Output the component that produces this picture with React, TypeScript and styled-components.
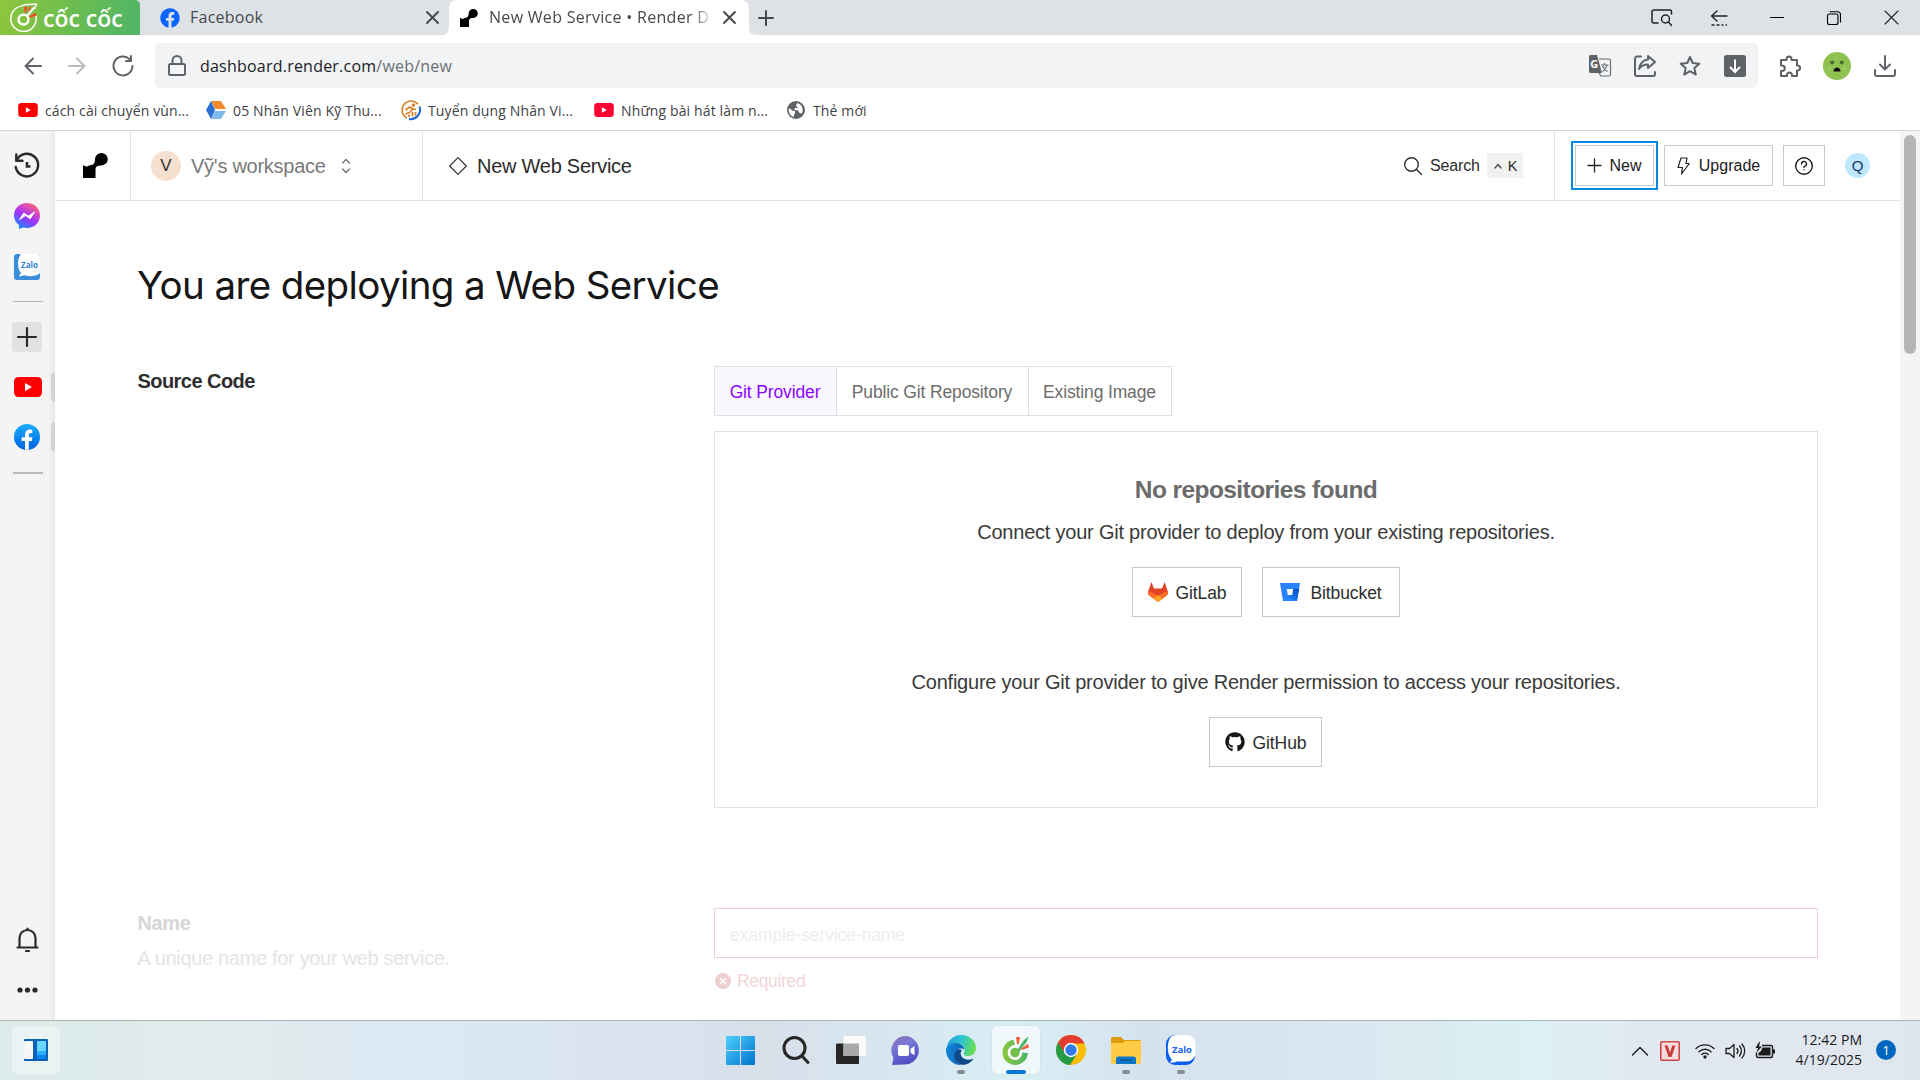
import React from 'react';
import styled, { createGlobalStyle } from 'styled-components';
import { FaGithub, FaFacebook } from 'react-icons/fa';

const SITE = '"Liberation Sans", Arial, sans-serif';
const SYSTEM = '"Open Sans", "Noto Sans", sans-serif';

const GlobalStyle = createGlobalStyle`
  *, *::before, *::after { box-sizing: border-box; }
  body { margin: 0; background: #fff; overflow: hidden; }
  svg { display: block; flex: none; overflow: visible; }
  button { background: none; border: 0; padding: 0; margin: 0; color: inherit; font: inherit; letter-spacing: inherit; }
`;

const Screen = styled.div`
  width: 1920px;
  height: 1080px;
  display: flex;
  flex-direction: column;
  overflow: hidden;
  background: #fff;
  font-family: ${SYSTEM};
`;

/* ---------- Browser chrome ---------- */

const TabStrip = styled.header`
  height: 35px;
  display: flex;
  flex: none;
  background: #dee1e6;
`;
const Brand = styled.div`
  width: 140px;
  height: 35px;
  display: flex;
  align-items: center;
  padding-left: 9px;
  gap: 5px;
  border-top-right-radius: 5px;
  background: linear-gradient(100deg, #8fc53d 0%, #6cbd4f 50%, #4fb567 100%);
  color: #fff;
`;
const BrandName = styled.span`
  font: 600 23px/36px "Open Sans", sans-serif;
  letter-spacing: 0;
  white-space: nowrap;
`;
const Tab = styled.div<{ $active?: boolean }>`
  position: relative;
  width: ${(p) => (p.$active ? 300 : 309)}px;
  height: 35px;
  display: flex;
  align-items: center;
  padding: 0 ${(p) => (p.$active ? '11px 0 11px' : '8px 0 20px')};
  background: ${(p) => (p.$active ? '#fff' : 'transparent')};
  border-radius: 8px 8px 0 0;
  color: #45484c;
  ${(p) =>
    p.$active &&
    `&::before, &::after { content: ''; position: absolute; bottom: 0; width: 6px; height: 6px; }
     &::before { left: -6px; background: radial-gradient(circle at 0 0, transparent 5.5px, #fff 6px); }
     &::after { right: -6px; background: radial-gradient(circle at 100% 0, transparent 5.5px, #fff 6px); }`}
`;
const TabTitle = styled.span<{ $fade?: boolean }>`
  flex: 1;
  margin: 0 8px 0 ${(p) => (p.$fade ? 11 : 10)}px;
  white-space: nowrap;
  font-size: 16px;
  line-height: 35px;
  letter-spacing: ${(p) => (p.$fade ? 0.3 : 0.25)}px;
  ${(p) => p.$fade && 'mask-image: linear-gradient(90deg, #000 91%, transparent 100%);'}
`;
const TabClose = styled.button`
  display: grid;
  place-items: center;
  width: 17px;
  height: 17px;
`;
const NewTab = styled.button`
  display: grid;
  place-items: center;
  width: 34px;
  height: 35px;
`;
const WindowControls = styled.div`
  margin-left: auto;
  display: grid;
  grid-template-columns: repeat(5, 57.25px);
  place-items: center;
  height: 35px;
`;
const Toolbar = styled.div`
  height: 61px;
  flex: none;
  display: flex;
  align-items: center;
  background: #fff;
`;
const NavButtons = styled.div`
  width: 155px;
  display: flex;
  align-items: center;
  padding-left: 24px;
  gap: 26px;
`;
const Omnibox = styled.div`
  width: 1603px;
  height: 45px;
  border-radius: 5px;
  background: #f1f3f4;
  display: flex;
  align-items: center;
  padding: 0 12px 0 13px;
`;
const Url = styled.span`
  margin-left: 14px;
  margin-right: auto;
  font-size: 16px;
  letter-spacing: 0.22px;
  color: #202124;
  em { font-style: normal; color: #6b6f74; }
`;
const IconRow = styled.div<{ $gap: number; $left?: number }>`
  display: flex;
  align-items: center;
  gap: ${(p) => p.$gap}px;
  margin-left: ${(p) => p.$left ?? 0}px;
`;
const Bookmarks = styled.nav`
  height: 35px;
  flex: none;
  display: flex;
  border-bottom: 1px solid #d3d5d8;
  padding-left: 18px;
`;
const Bookmark = styled.a<{ $w: number }>`
  width: ${(p) => p.$w}px;
  height: 28px;
  display: flex;
  align-items: center;
  gap: 7px;
  font-size: 14px;
  letter-spacing: 0.13px;
  color: #3f4246;
  white-space: nowrap;
`;

/* ---------- Left rail ---------- */

const Body = styled.div`
  height: 889px;
  flex: none;
  display: flex;
`;
const Rail = styled.aside`
  width: 55px;
  background: linear-gradient(90deg, #f4f4f4 88%, #e9e9e9 100%);
  display: flex;
  flex-direction: column;
`;
const RailItem = styled.div<{ $h: number; $tab?: boolean }>`
  height: ${(p) => p.$h}px;
  display: flex;
  align-items: center;
  padding-left: 14px;
  ${(p) =>
    p.$tab &&
    `&::after { content: ''; width: 4px; height: 30px; margin-left: auto; border-radius: 4px 0 0 4px; background: #d4d4d4; }`}
`;
const RailLine = styled.hr<{ $t: number; $mt: number; $mb: number }>`
  width: 30px;
  height: ${(p) => p.$t}px;
  border: 0;
  margin: ${(p) => p.$mt}px 0 ${(p) => p.$mb}px 13px;
  background: #b9b9b9;
`;
const AddTile = styled.button`
  width: 30px;
  height: 30px;
  margin-left: -2px;
  border-radius: 4px;
  background: #e2e2e2;
  display: grid;
  place-items: center;
`;
const Spacer = styled.div`
  flex: 1;
`;

/* ---------- Render dashboard ---------- */

const Page = styled.div`
  width: 1845px;
  font-family: ${SITE};
  color: #2b2b2b;
  overflow: hidden;
`;
const Header = styled.div`
  height: 70px;
  display: flex;
  border-bottom: 1px solid #e3e3e3;
`;
const HeaderCell = styled.div<{ $w?: number; $pl: number; $line?: boolean }>`
  ${(p) => (p.$w ? `width: ${p.$w}px;` : 'flex: 1;')}
  display: flex;
  align-items: center;
  padding-left: ${(p) => p.$pl}px;
  ${(p) => p.$line && 'border-right: 1px solid #e3e3e3;'}
`;
const Avatar = styled.span<{ $size: number; $font: number; $bg: string; $fg: string }>`
  width: ${(p) => p.$size}px;
  height: ${(p) => p.$size}px;
  border-radius: 50%;
  background: ${(p) => p.$bg};
  color: ${(p) => p.$fg};
  display: grid;
  place-items: center;
  font-size: ${(p) => p.$font}px;
  line-height: 1;
`;
const Workspace = styled.span`
  margin: 0 15px 0 10px;
  padding-top: 1px;
  font-size: 20px;
  letter-spacing: -0.26px;
  color: #7a7a7a;
`;
const Crumb = styled.span`
  margin-left: 10px;
  padding-top: 1px;
  font-size: 20px;
  letter-spacing: -0.26px;
`;
const SearchLabel = styled.span`
  margin: 0 7px 0 8px;
  font-size: 16px;
  letter-spacing: -0.15px;
`;
const Shortcut = styled.kbd`
  width: 36px;
  height: 25px;
  background: #f1f1f1;
  display: flex;
  align-items: center;
  padding-left: 7px;
  gap: 6px;
  font: 14.5px ${SITE};
`;
const ActionButton = styled.button<{ $w: number; $mr: number; $focus?: boolean }>`
  width: ${(p) => p.$w}px;
  height: 41px;
  margin-right: ${(p) => p.$mr}px;
  border: 1px solid #c9c9c9;
  display: flex;
  align-items: center;
  justify-content: center;
  gap: 7px;
  font-size: 16px;
  color: #1c1c1c;
  ${(p) => p.$focus && 'outline: 2px solid #068ae6; outline-offset: 2px;'}
`;
const Content = styled.main`
  padding-left: 82px;
`;
const PageTitle = styled.h1`
  margin: 0;
  height: 165px;
  padding-top: 59px;
  font: 400 38.5px/50px Inter, sans-serif;
  letter-spacing: -0.61px;
  color: #161616;
`;
const Section = styled.section<{ $h: number }>`
  display: grid;
  grid-template-columns: 577px 1104px;
  align-items: start;
  height: ${(p) => p.$h}px;
`;
const SectionTitle = styled.h2<{ $muted?: boolean }>`
  margin: 0 0 0 0.5px;
  font-size: 20px;
  line-height: 30px;
  font-weight: 700;
  letter-spacing: ${(p) => (p.$muted ? -0.35 : -0.55)}px;
  color: ${(p) => (p.$muted ? '#d6d6d6' : '#2e2e2e')};
`;
const SectionNote = styled.p`
  margin: 5px 0 0 0.5px;
  font-size: 20px;
  line-height: 30px;
  letter-spacing: -0.32px;
  color: #e4e4e4;
`;
const Tabs = styled.div`
  width: 458px;
  height: 50px;
  display: flex;
  border: 1px solid #e0e0e3;
  margin-bottom: 15px;
`;
const SourceTab = styled.button<{ $w: number; $on?: boolean }>`
  width: ${(p) => p.$w}px;
  padding: 2px 1px 0 0;
  font-size: 17.5px;
  letter-spacing: -0.14px;
  color: ${(p) => (p.$on ? '#8a05ff' : '#6c6c6c')};
  background: ${(p) => (p.$on ? '#faf7ff' : '#fff')};
  & + & { border-left: 1px solid #e0e0e3; }
`;
const Panel = styled.div`
  height: 377px;
  border: 1px solid #e3e3e3;
  padding-top: 40px;
  display: flex;
  flex-direction: column;
  align-items: center;
`;
const EmptyTitle = styled.h3`
  margin: 0 20px 9px 0;
  font-size: 24.5px;
  line-height: 36px;
  font-weight: 700;
  letter-spacing: -0.58px;
  color: #6b6b6b;
`;
const Hint = styled.p`
  margin: 0;
  font-size: 20px;
  line-height: 30px;
  letter-spacing: -0.22px;
  color: #3a3a3a;
`;
const Providers = styled.div<{ $mb: number; $mr?: number }>`
  margin: 20px ${(p) => p.$mr ?? 0}px ${(p) => p.$mb}px 0;
  display: flex;
  gap: 20px;
`;
const Provider = styled.button<{ $w: number; $gap: number }>`
  width: ${(p) => p.$w}px;
  height: 50px;
  border: 1px solid #c9c9c9;
  display: flex;
  align-items: center;
  justify-content: center;
  gap: ${(p) => p.$gap}px;
  font-size: 17.5px;
  letter-spacing: -0.1px;
  color: #2e2e2e;
  span { padding-top: 2px; }
`;
const NameInput = styled.input`
  display: block;
  width: 1104px;
  height: 50px;
  border: 1px solid #f0cfd3;
  padding: 4px 15px 0 15px;
  font: 17.5px ${SITE};
  letter-spacing: -0.1px;
  outline: 0;
  &::placeholder { color: #eeeeee; opacity: 1; }
`;
const FieldError = styled.div`
  margin-top: 12px;
  height: 22px;
  display: flex;
  align-items: center;
  gap: 6px;
  font-size: 17.5px;
  letter-spacing: -0.33px;
  color: #f3d5d8;
  padding-left: 1px;
`;
const Scrollbar = styled.div`
  width: 20px;
  background: #f4f4f4;
  padding: 4px 4px 0;
`;
const Thumb = styled.div`
  width: 12px;
  height: 219px;
  border-radius: 6px;
  background: #b5b5b5;
`;

/* ---------- Taskbar ---------- */

const Taskbar = styled.footer`
  height: 60px;
  flex: none;
  display: grid;
  grid-template-columns: 713px 1fr 290px;
  border-top: 1px solid #adb5ba;
  background: linear-gradient(90deg, #dcebea 0, #e1ebec 200px, #e1e9ee 310px, #dce9f5 370px, #dbe6f4 520px, #d8e0ea 760px,
    #d7e5ee 870px, #d8eef4 1010px, #d6e2ee 1150px, #d8e6ef 1300px, #dcf0f5 1540px, #e1e8f0 1650px, #dfe6ee 1920px);
`;
const WidgetTile = styled.div`
  width: 48px;
  height: 48px;
  margin: 5px 0 0 12px;
  border-radius: 5px;
  background: rgba(255, 255, 255, 0.38);
  display: grid;
  place-items: center;
`;
const Apps = styled.div`
  display: grid;
  grid-template-columns: repeat(9, 55px);
  align-content: start;
  padding-top: 5px;
`;
const AppButton = styled.div<{ $active?: boolean; $running?: boolean }>`
  position: relative;
  width: 48px;
  height: 48px;
  justify-self: center;
  display: grid;
  place-items: center;
  border-radius: 5px;
  ${(p) => p.$active && 'background: rgba(255,255,255,.62); box-shadow: 0 0 1px rgba(0,0,0,.25);'}
  ${(p) =>
    p.$running &&
    `&::after { content: ''; position: absolute; bottom: 0; left: 50%; transform: translateX(-50%);
      width: ${p.$active ? 20 : 8}px; height: 4px; border-radius: 2px; background: ${p.$active ? '#0a76d4' : '#858b90'}; }`}
`;
const Tray = styled.div`
  display: flex;
  align-items: center;
  color: #1b1b1b;
`;
const Clock = styled.div`
  margin-left: auto;
  padding-bottom: 2px;
  text-align: right;
  font-size: 14px;
  line-height: 20px;
  letter-spacing: 0.02px;
`;
const CountBadge = styled.span`
  width: 20px;
  height: 20px;
  margin: 0 24px 2px 14px;
  border-radius: 50%;
  background: #0067c0;
  color: #fff;
  font-size: 13.5px;
  line-height: 20px;
  text-align: center;
`;

/* ---------- Drawings ---------- */

const Stroke = ({ w = 20, h = w, vb, c = '#5f6368', sw = 2, children }: any) => (
  <svg width={w} height={h} viewBox={vb ?? `0 0 ${w} ${h}`} fill="none" stroke={c} strokeWidth={sw} strokeLinecap="round" strokeLinejoin="round">
    {children}
  </svg>
);

const RenderMark = ({ w }: { w: number }) => (
  <svg width={w} height={w} viewBox="0 0 25 25">
    <path d="M18.500 0a6.200 6.200 0 0 1 0 12.400c-3 0-6 .5-6 4.400V25H0V12.400h1.200A3.200 3.200 0 0 0 6 12.400c4 0 6-1.800 6-6.200A6.300 6.300 0 0 1 18.500 0z" />
  </svg>
);

const History = () => (
  <Stroke w={26} c="#2a2a2a" sw={2.4}>
    <path d="M2.500 7.500A11.300 11.300 0 1 1 1.700 14" />
    <path d="M2.300 1.500v6.300h6.200" />
    <path d="M13 9v4.500h3.500" strokeWidth="2.600" strokeLinecap="butt" strokeLinejoin="miter" />
  </Stroke>
);

const YouTube = ({ w, h, c = '#ff0000' }: { w: number; h: number; c?: string }) => (
  <svg width={w} height={h} viewBox="0 0 28 20">
    <rect width="28" height="20" rx="4.500" fill={c} />
    <path d="M11 6v8l7-4z" fill="#fff" />
  </svg>
);

const CloseX = ({ s = 12, sw = 1.9, c = '#45484c' }) => (
  <Stroke w={s} c={c} sw={sw}>
    <path d={`M1 1L${s - 1} ${s - 1}M${s - 1} 1L1 ${s - 1}`} />
  </Stroke>
);

const Plus = ({ s, sw, c }: { s: number; sw: number; c: string }) => (
  <Stroke w={s} c={c} sw={sw}>
    <path d={`M${s / 2} 1V${s - 1}M1 ${s / 2}H${s - 1}`} />
  </Stroke>
);

const CocCocHand = ({ s, white }: { s: number; white?: boolean }) => (
  <svg width={s} height={s} viewBox="0 0 28 28" fill="none">
    <defs>
      <linearGradient id="ccg" x1="0" x2="1">
        <stop stopColor="#8cc63f" />
        <stop offset="1" stopColor="#4db56a" />
      </linearGradient>
    </defs>
    {white ? (
      <>
        <path d="M12 3A12.300 12.300 0 1 0 26.300 15.500c0-1.500-.2-2.500-.5-3.500M12 3C14 1.300 20 1 26.500 1.200L24.500 6" stroke="#fff" strokeWidth="1.400" />
        <circle cx="14" cy="16" r="4.800" stroke="#fff" strokeWidth="2.300" />
        <path d="M17.500 12.500L24.500 4" stroke="#fff" strokeWidth="2" />
        <path d="M14.500 3.500h3.200l-1.200 6h-1.500zM25.500 9.500l1 2.800-6.300 2-.7-1.500zM19.500 3.500h2l-2.500 5h-1z" fill="#f4492d" />
      </>
    ) : (
      <>
        <path d="M12 3.500A12.300 12.300 0 1 0 26 16.500l-5.500-.5a7 7 0 1 1-7-7z" fill="url(#ccg)" />
        <circle cx="13.500" cy="16" r="7" fill="#fff" />
        <circle cx="13.500" cy="16" r="4.600" fill="#74bf4c" />
        <path d="M15.500 14L22 4l4.500-3.500-1.500 5-6 7.500-1 2z" fill="#4db56a" />
        <path d="M14.500 1h4L17 8h-1.500zM26 7.500l1 3.500-7 2.500-.5-1.500z" fill="#f4603a" />
      </>
    )}
  </svg>
);

const ZaloSide = () => (
  <svg width="26" height="26" viewBox="0 0 26 26">
    <rect width="26" height="26" rx="3" fill="#3a8edb" />
    <path d="M7 0h16a3 3 0 0 1 3 3v16c-4 3.500-12 4-16 2-1 1-3 1.500-5 1l2-3C3 14 3 5 7 0z" fill="#fff" />
    <text x="15.500" y="14" textAnchor="middle" fontFamily="Open Sans, sans-serif" fontSize="8" fontWeight="700" fill="#2f80d0">Zalo</text>
  </svg>
);

const ZaloApp = () => (
  <svg width="30" height="30" viewBox="0 0 30 30">
    <rect y="0" width="29" height="30" rx="9" fill="#0b5cf0" />
    <path d="M10 0h11a8.500 8.500 0 0 1 8.500 8.500v9A9 9 0 0 1 21 26.500H11c-2 1-5 1.500-7 1l2-3C0 19 1 4 6 1z" fill="#fff" />
    <text x="16" y="17.500" textAnchor="middle" fontFamily="Open Sans, sans-serif" fontSize="9.500" fontWeight="700" fill="#1464f0">Zalo</text>
  </svg>
);

const Messenger = () => (
  <svg width="26" height="26" viewBox="0 0 26 26">
    <defs>
      <linearGradient id="msg" x1="0.2" y1="1" x2="0.8" y2="0">
        <stop stopColor="#0a8fff" />
        <stop offset=".45" stopColor="#a033ff" />
        <stop offset=".75" stopColor="#d94bb5" />
        <stop offset="1" stopColor="#ff6a6a" />
      </linearGradient>
    </defs>
    <path d="M13 0c7.500 0 13 5.400 13 12.500S20.500 25 13 25c-1.300 0-2.500-.2-3.600-.5L5 26v-4C2 19.800 0 16.500 0 12.500 0 5.400 5.500 0 13 0z" fill="url(#msg)" />
    <path d="M5.500 16.500l4.300-6.500 4.700 3.200L20.500 9l-4.300 6.800-4.700-3.300z" fill="#fff" stroke="#fff" strokeLinejoin="round" />
  </svg>
);

const FacebookRound = () => (
  <svg width="26" height="26" viewBox="0 0 26 26">
    <defs>
      <linearGradient id="fbg" x1="0" y1="0" x2="0" y2="1">
        <stop stopColor="#18acfe" />
        <stop offset="1" stopColor="#0163e0" />
      </linearGradient>
    </defs>
    <circle cx="13" cy="13" r="13" fill="url(#fbg)" />
    <path d="M11 25.800V17H7.700v-3.800H11v-2.600c0-3.300 2-5.100 4.900-5.100 1.300 0 2.400.2 2.400.2v3.200h-1.500c-1.600 0-2 1-2 2v2.300h3.600L17.800 17h-3v8.800z" fill="#fff" />
  </svg>
);

const GitLab = () => (
  <svg width="20" height="20" viewBox="0 0 20 20">
    <path d="M3.400 0L6 6.500h8L16.600 0 20 10l-.8 3L10 20 .8 13 0 10z" fill="#e24329" />
    <path d="M0 9.500c3 0 5 1 10 5.200C15 10.500 17 9.500 20 9.500c.2 1.500-.2 2.800-1 3.700L10 20 1 13.200C.2 12.300-.2 11 0 9.500z" fill="#fc6d26" />
    <path d="M10 13l4.500 3.600L10 20l-4.500-3.400z" fill="#fca326" />
  </svg>
);

const Bitbucket = () => (
  <svg width="20" height="18" viewBox="0 0 20 18">
    <defs>
      <linearGradient id="bbg" x1="1" y1=".3" x2=".4" y2=".9">
        <stop stopColor="#0052cc" />
        <stop offset="1" stopColor="#2684ff" />
      </linearGradient>
    </defs>
    <path d="M0 0h20l-3 18H3z" fill="#2684ff" />
    <path d="M13 6h6l-2 12H3l6-6h3z" fill="url(#bbg)" />
    <path d="M6.800 6h6.400l-1 6H7.800z" fill="#fff" />
  </svg>
);

const AvatarFace = () => (
  <svg width="28" height="28" viewBox="0 0 28 28">
    <circle cx="14" cy="14" r="14" fill="#8fc250" />
    <circle cx="9.200" cy="10.500" r="2" fill="#4a6b2c" />
    <circle cx="18.800" cy="10.500" r="2" fill="#4a6b2c" />
    <path d="M10.500 19.500c0-5.500 7-5.500 7 0z" fill="#111" />
    <path d="M6 16.500h1.500M20.500 16.500H22" stroke="#c5e29b" strokeWidth="1.500" />
  </svg>
);

const Edge = () => (
  <svg width="30" height="30" viewBox="0 0 30 30">
    <defs>
      <linearGradient id="eg1" x1="0" x2="1" y1=".2" y2=".4">
        <stop stopColor="#1f9fdf" />
        <stop offset=".5" stopColor="#2cc4cf" />
        <stop offset="1" stopColor="#6be04e" />
      </linearGradient>
      <linearGradient id="eg2" x1="0" x2="1">
        <stop stopColor="#1389d8" />
        <stop offset="1" stopColor="#0b62b5" />
      </linearGradient>
    </defs>
    <path d="M1 11C3 4 8.500 0 15 0c9 0 15 6 15 13 0 5-3.500 8-8 8-3.500 0-5.500-1.500-4-3.500 2-4-1-9-7-9-4 0-8 1-10 2.500z" fill="url(#eg1)" />
    <path d="M0 15c0-4 4-7 9.500-7 5 0 8.500 3 8.800 6.500C15 12 10 14 9 19s2 9 7 11C7 30.500 0 24 0 15z" fill="url(#eg2)" />
    <path d="M10 16c-4 5-1 12.500 6 13.800 5 .4 9.500-2.500 11.500-6.300-4 2-9 1.500-11.500-1.500-2-2.300-1.500-5 0-7-2-1-4.500-1-6 1z" fill="#114a8b" />
  </svg>
);

const Chrome = () => (
  <svg width="30" height="30" viewBox="0 0 30 30">
    <circle cx="15" cy="15" r="15" fill="#fbbc05" />
    <path d="M15 15L2 7.500A15 15 0 0 0 14 30l7-11z" fill="#259b48" />
    <path d="M15 8.500h13.500A15 15 0 0 0 2 7.500L9 18.500z" fill="#e33b2e" />
    <circle cx="15" cy="15" r="7.200" fill="#fff" />
    <circle cx="15" cy="15" r="5.700" fill="#2f7bea" />
  </svg>
);

const Explorer = () => (
  <svg width="30" height="27" viewBox="0 0 30 27">
    <path d="M0 2a2 2 0 0 1 2-2h8l3 3h15a2 2 0 0 1 2 2v5H0z" fill="#dd9b08" />
    <path d="M0 6h12l2-2h16v21a2 2 0 0 1-2 2H2a2 2 0 0 1-2-2z" fill="#ffcd45" />
    <path d="M5 27v-5a2.500 2.500 0 0 1 2.500-2.500h15A2.500 2.500 0 0 1 25 22v5z" fill="#0f75c5" />
    <path d="M9 23h12" stroke="#0a4d8c" strokeWidth="1.200" />
  </svg>
);

const WindowsLogo = () => (
  <svg width="29" height="29" viewBox="0 0 29 29">
    <defs>
      <linearGradient id="wing" x1="0" y1="0" x2="1" y2="1">
        <stop stopColor="#4fd0fb" />
        <stop offset="1" stopColor="#0072d0" />
      </linearGradient>
    </defs>
    <path d="M1 0h13v14H0V1a1 1 0 0 1 1-1zM15 0h13a1 1 0 0 1 1 1v13H15zM0 15h14v14H1a1 1 0 0 1-1-1zM15 15h14v13a1 1 0 0 1-1 1H15z" fill="url(#wing)" />
  </svg>
);

const ChatApp = () => (
  <svg width="29" height="29" viewBox="0 0 29 29">
    <defs>
      <linearGradient id="chg" x1="0" y1="0" x2=".4" y2="1">
        <stop stopColor="#8b6aa8" />
        <stop offset=".4" stopColor="#7b79d8" />
        <stop offset="1" stopColor="#4f4dc4" />
      </linearGradient>
    </defs>
    <path d="M15 0a14 14 0 1 1-3 28.500L1 29l1.500-7A14.500 14.500 0 0 1 15 0z" fill="url(#chg)" />
    <rect x="7" y="9" width="11" height="11" rx="1.800" fill="#fff" />
    <path d="M19.500 13l4-3v9.500l-4-3z" fill="#fff" />
  </svg>
);

export default function App() {
  return (
    <Screen>
      <GlobalStyle />
      <TabStrip>
        <Brand>
          <CocCocHand s={29} white />
          <BrandName>cốc cốc</BrandName>
        </Brand>
        <Tab>
          <FaFacebook size={20} color="#0866ff" />
          <TabTitle>Facebook</TabTitle>
          <TabClose><CloseX s={13} /></TabClose>
        </Tab>
        <Tab $active>
          <RenderMark w={18} />
          <TabTitle $fade>New Web Service • Render D</TabTitle>
          <TabClose><CloseX s={13} /></TabClose>
        </Tab>
        <NewTab><Plus s={16} sw={2} c="#45484c" /></NewTab>
        <WindowControls>
          <Stroke w={22} h={18} c="#222" sw={1.5}>
            <path d="M7 14H3a2 2 0 0 1-2-2V3a2 2 0 0 1 2-2h16a1.500 1.500 0 0 1 1.500 1.500V5" />
            <circle cx="14.500" cy="10" r="4" />
            <path d="M17.500 13l3 3.500" />
          </Stroke>
          <Stroke w={18} h={16} c="#222" sw={1.4}>
            <path d="M16 6H.5M6 1L.5 6 6 11" />
            <path d="M1 15h2M6 15h2M11 15h1M15 15h.5" />
          </Stroke>
          <Stroke w={14} c="#000" sw={1}><path d="M.5 6.500h13" /></Stroke>
          <Stroke w={14} c="#000" sw={1.1}>
            <rect x=".5" y="3" width="10.500" height="10.500" rx="2" />
            <path d="M3 .700h7.500a3 3 0 0 1 3 3V11" />
          </Stroke>
          <CloseX s={15} sw={1.1} c="#222" />
        </WindowControls>
      </TabStrip>

      <Toolbar>
        <NavButtons>
          <Stroke w={18} c="#5f6368"><path d="M17 9H2M9 1.500L1.500 9 9 16.500" /></Stroke>
          <Stroke w={18} c="#babcbe"><path d="M1 9h15M9 1.500L16.500 9 9 16.500" /></Stroke>
          <Stroke w={22} c="#5f6368"><path d="M20.500 11a9.500 9.500 0 1 1-3-7M19 1v5h-5" /></Stroke>
        </NavButtons>
        <Omnibox>
          <Stroke w={18} h={21}>
            <rect x="1" y="9" width="16" height="11" rx="1.500" />
            <path d="M4.500 9V5.500a4.500 4.500 0 0 1 9 0V9" />
          </Stroke>
          <Url>dashboard.render.com<em>/web/new</em></Url>
          <IconRow $gap={23}>
            <svg width="22" height="22" viewBox="0 0 22 22">
              <path d="M10 4h10a1.500 1.500 0 0 1 1.500 1.500v14A1.500 1.500 0 0 1 20 21h-8l-2-3" fill="none" stroke="#6b6f73" strokeWidth="1.200" />
              <path d="M1.500 0H8l5 18H1.500A1.500 1.500 0 0 1 0 16.500v-15A1.500 1.500 0 0 1 1.500 0z" fill="#5f6368" />
              <text x="1.200" y="13" fontFamily="Open Sans, sans-serif" fontSize="11" fontWeight="700" fill="#fff">G</text>
              <path d="M12 10h7.500M15.500 8v2M18 10c-.5 3-2.500 5-4.500 6.500M13.500 11c1 2.500 3 4.500 5 5.500" fill="none" stroke="#6b6f73" strokeWidth="1.200" />
            </svg>
            <Stroke w={22}>
              <path d="M7 1.500H3a2 2 0 0 0-2 2V19a2 2 0 0 0 2 2h16a2 2 0 0 0 2-2v-2" />
              <path d="M14 1l7 6-7 6V9.500c-4 0-7 1.500-9 4.500.5-5 4-9 9-9.500z" />
            </Stroke>
            <Stroke w={22}>
              <path d="M11 2l2.700 6 6.600.7-5 4.400 1.500 6.500L11 16.200l-5.800 3.400 1.500-6.500-5-4.400 6.600-.7z" />
            </Stroke>
            <svg width="22" height="22" viewBox="0 0 22 22">
              <rect width="22" height="22" rx="2.500" fill="#5f6368" />
              <path d="M11 4.500v12M6 12l5 5 5-5" fill="none" stroke="#fff" strokeWidth="2" />
            </svg>
          </IconRow>
        </Omnibox>
        <IconRow $gap={22} $left={21}>
          <Stroke w={22}>
            <path d="M2 5h5.500V4a2.500 2.500 0 0 1 5 0v1H18v5.500h.7a2.500 2.500 0 0 1 0 5H18V21h-5v-1a2.500 2.500 0 0 0-5 0v1H2v-5h1a2.500 2.500 0 0 0 0-5.500H2z" />
          </Stroke>
          <AvatarFace />
          <IconRow $gap={0} $left={1}>
            <Stroke w={22}><path d="M11 1v13M6 9.500l5 5 5-5M1 15v4a2 2 0 0 0 2 2h16a2 2 0 0 0 2-2v-4" /></Stroke>
          </IconRow>
        </IconRow>
      </Toolbar>

      <Bookmarks>
        <Bookmark $w={188}><YouTube w={20} h={14} />cách cài chuyển vùn...</Bookmark>
        <Bookmark $w={195}>
          <svg width="20" height="18" viewBox="0 0 20 18">
            <path d="M5 0h10l5 8H9z" fill="#f58a2c" />
            <path d="M5 0L0 9l5 9 4-9z" fill="#2a6fd6" />
            <path d="M9 10h11l-5 8H5z" fill="#7fb9ec" />
          </svg>
          05 Nhân Viên Kỹ Thu...
        </Bookmark>
        <Bookmark $w={193}>
          <svg width="20" height="20" viewBox="0 0 20 20" fill="none">
            <path d="M6 18A9 9 0 0 1 8 1.300a9 9 0 0 1 9 3" stroke="#d98026" strokeWidth="1.600" />
            <path d="M18.500 6.500A9.500 9.500 0 0 1 8 19" stroke="#2563d8" strokeWidth="2" />
            <circle cx="12.500" cy="5" r="1.800" fill="#d98026" />
            <path d="M4.500 10l4-3 3.500 2-3.500 3.500-4 1.500M12 9l3 .5M11.500 12v4.500M8 14.500v2.500M14.500 12v3.500" stroke="#d98026" strokeWidth="1.700" />
          </svg>
          Tuyển dụng Nhân Vi...
        </Bookmark>
        <Bookmark $w={193}><YouTube w={20} h={14} c="#ff0033" />Những bài hát làm n...</Bookmark>
        <Bookmark $w={90}>
          <svg width="18" height="18" viewBox="0 0 18 18">
            <circle cx="9" cy="9" r="9" fill="#5f6368" />
            <path d="M2 7l4 3h2v2.500l-1 1V16A7.200 7.200 0 0 1 2 7zM10 2l-1 3 2 2h-3l-1 2 4 .5 1.500 2.500 2.500.5A7.300 7.300 0 0 0 10 2z" fill="#fff" />
          </svg>
          <IconRow $gap={0} $left={1}>Thẻ mới</IconRow>
        </Bookmark>
      </Bookmarks>

      <Body>
        <Rail>
          <RailItem $h={69}><History /></RailItem>
          <RailItem $h={32}><Messenger /></RailItem>
          <RailItem $h={69}><ZaloSide /></RailItem>
          <RailLine $t={1} $mt={0} $mb={10} />
          <RailItem $h={50}><AddTile><Plus s={20} sw={2.2} c="#2a2a2a" /></AddTile></RailItem>
          <RailItem $h={50} $tab><YouTube w={28} h={20} /></RailItem>
          <RailItem $h={50} $tab><FacebookRound /></RailItem>
          <RailLine $t={2} $mt={10} $mb={0} />
          <Spacer />
          <RailItem $h={50}>
            <Stroke w={28} c="#2a2a2a" sw={2.2}>
              <path d="M5.500 20.500V12a8 8 0 0 1 16 0v8.500M3.500 21.500h20" />
              <path d="M13.500 2.500v1M12 25h3" />
            </Stroke>
          </RailItem>
          <RailItem $h={50}>
            <svg width="28" height="6" viewBox="0 0 28 6" fill="#2a2a2a">
              <circle cx="6" cy="3" r="2.600" /><circle cx="13.500" cy="3" r="2.600" /><circle cx="21" cy="3" r="2.600" />
            </svg>
          </RailItem>
          <RailItem $h={5} />
        </Rail>

        <Page>
          <Header>
            <HeaderCell $w={76} $pl={28} $line><RenderMark w={25} /></HeaderCell>
            <HeaderCell $w={292} $pl={20} $line>
              <Avatar $size={30} $font={17} $bg="#f5dfce" $fg="#333">V</Avatar>
              <Workspace>Vỹ's workspace</Workspace>
              <Stroke w={10} h={16} c="#6b6b6b" sw={1.2}><path d="M1.500 5L5 1.500 8.500 5M1.500 11L5 14.500 8.500 11" /></Stroke>
            </HeaderCell>
            <HeaderCell $pl={26}>
              <Stroke w={18} c="#333" sw={1.2}><path d="M9 .700L17.300 9 9 17.300.700 9z" /></Stroke>
              <Crumb>New Web Service</Crumb>
            </HeaderCell>
            <HeaderCell $w={151} $pl={0} $line>
              <Stroke w={18} c="#333" sw={1.4}><circle cx="7.500" cy="7.500" r="6.800" /><path d="M12.500 12.500l5 5" /></Stroke>
              <SearchLabel>Search</SearchLabel>
              <Shortcut>
                <Stroke w={8} h={6} c="#444" sw={1.2}><path d="M1 5l3-3.500L7 5" /></Stroke>
                K
              </Shortcut>
            </HeaderCell>
            <HeaderCell $w={345} $pl={20}>
              <ActionButton $w={79} $mr={10} $focus><Plus s={15} sw={1.3} c="#222" />New</ActionButton>
              <ActionButton $w={109} $mr={10}>
                <Stroke w={13} h={18} c="#222" sw={1.2}><path d="M4 1h6L9 6.500h3.300L4.500 17 5.500 10.500H1z" /></Stroke>
                <IconRow $gap={0} $left={2}>Upgrade</IconRow>
              </ActionButton>
              <ActionButton $w={42} $mr={20}>
                <Stroke w={18} c="#222" sw={1.4}>
                  <circle cx="9" cy="9" r="8.300" />
                  <path d="M6.500 7a2.500 2.500 0 1 1 3.500 2.200c-.7.300-1 .7-1 1.300M9 13v.1" />
                </Stroke>
              </ActionButton>
              <Avatar $size={25} $font={15} $bg="#bfe8ff" $fg="#1a3a66">Q</Avatar>
            </HeaderCell>
          </Header>

          <Content>
            <PageTitle>You are deploying a Web Service</PageTitle>
            <Section $h={542}>
              <SectionTitle>Source Code</SectionTitle>
              <div>
                <Tabs>
                  <SourceTab $w={121} $on>Git Provider</SourceTab>
                  <SourceTab $w={192}>Public Git Repository</SourceTab>
                  <SourceTab $w={143}>Existing Image</SourceTab>
                </Tabs>
                <Panel>
                  <EmptyTitle>No repositories found</EmptyTitle>
                  <Hint>Connect your Git provider to deploy from your existing repositories.</Hint>
                  <Providers $mb={50}>
                    <Provider $w={110} $gap={8}><GitLab /><span>GitLab</span></Provider>
                    <Provider $w={138} $gap={10}><Bitbucket /><span>Bitbucket</span></Provider>
                  </Providers>
                  <Hint>Configure your Git provider to give Render permission to access your repositories.</Hint>
                  <Providers $mb={0} $mr={1}>
                    <Provider $w={113} $gap={8}><FaGithub size={20} color="#161616" /><span>GitHub</span></Provider>
                  </Providers>
                </Panel>
              </div>
            </Section>
            <Section $h={112}>
              <div>
                <SectionTitle $muted>Name</SectionTitle>
                <SectionNote>A unique name for your web service.</SectionNote>
              </div>
              <div>
                <NameInput placeholder="example-service-name" />
                <FieldError>
                  <svg width="16" height="16" viewBox="0 0 16 16">
                    <circle cx="8" cy="8" r="8" fill="#f0cfd3" />
                    <path d="M5 5l6 6M11 5l-6 6" stroke="#fff" strokeWidth="1.500" />
                  </svg>
                  Required
                </FieldError>
              </div>
            </Section>
          </Content>
        </Page>
        <Scrollbar><Thumb /></Scrollbar>
      </Body>

      <Taskbar>
        <WidgetTile>
          <svg width="24" height="22" viewBox="0 0 24 22">
            <rect width="24" height="22" rx="1" fill="#0a62b8" />
            <rect x="0" y="2" width="9" height="18" rx="1" fill="#f6f6f6" />
            <rect x="13" y="2" width="9" height="10" fill="#66d6ff" />
            <rect x="13" y="12" width="9" height="4" fill="#27b0ff" />
            <rect x="13" y="16" width="9" height="4" fill="#0a84ec" />
          </svg>
        </WidgetTile>
        <Apps>
          <AppButton><WindowsLogo /></AppButton>
          <AppButton>
            <Stroke w={28} c="#262626" sw={3}><circle cx="12.500" cy="12" r="10.500" /><path d="M20 20l6 6.500" /></Stroke>
          </AppButton>
          <AppButton>
            <svg width="30" height="28" viewBox="0 0 30 28">
              <rect x="0" y="7.500" width="23" height="20.500" rx="1" fill="#262626" />
              <rect x="7.500" y="0" width="22.500" height="20" rx="1" fill="#fafafa" />
              <rect x="7.500" y="7.500" width="15.500" height="12.500" fill="#a9a9a9" />
            </svg>
          </AppButton>
          <AppButton><ChatApp /></AppButton>
          <AppButton $running><Edge /></AppButton>
          <AppButton $active $running><CocCocHand s={29} /></AppButton>
          <AppButton><Chrome /></AppButton>
          <AppButton $running><Explorer /></AppButton>
          <AppButton $running><ZaloApp /></AppButton>
        </Apps>
        <Tray>
          <IconRow $gap={11} $left={1}>
            <Stroke w={18} h={10} c="#1b1b1b" sw={1.4}><path d="M1.500 9L9 1.500 16.500 9" /></Stroke>
            <svg width="20" height="20" viewBox="0 0 20 20">
              <rect x=".8" y=".8" width="18.400" height="18.400" rx="1" fill="#f8dcdc" stroke="#c94a48" strokeWidth="1.600" />
              <path d="M4.500 4.500h3.200L10 11.500l2.300-7h3.200L11.500 16h-3z" fill="#c63d3b" />
            </svg>
          </IconRow>
          <IconRow $gap={10} $left={15}>
            <Stroke w={20} h={16} c="#1b1b1b" sw={1.4}>
              <path d="M1 5.500a13 13 0 0 1 18 0M4 8.700a8.500 8.500 0 0 1 12 0M6.800 11.500a4.600 4.600 0 0 1 6.400 0" />
              <circle cx="10" cy="14" r="1" fill="#1b1b1b" />
            </Stroke>
            <Stroke w={20} h={16} c="#1b1b1b" sw={1.3}>
              <path d="M1 5.500h3.500L9 1.500v13l-4.500-4H1z" />
              <path d="M12 5.500a4 4 0 0 1 0 5M14.500 3a7.500 7.500 0 0 1 0 10M17 1a10.500 10.500 0 0 1 0 14" />
            </Stroke>
            <svg width="20" height="16" viewBox="0 0 20 16">
              <path d="M7 2.500h9A1.500 1.500 0 0 1 17.500 4v9a1.500 1.500 0 0 1-1.500 1.500H3A1.500 1.500 0 0 1 1.500 13V9.500" fill="none" stroke="#1b1b1b" strokeWidth="1.400" />
              <path d="M7.500 4.500H15.500v8H3.500V10L6 8zM18 6.500h2v4h-2zM4 -1L.5 5H3L1.500 9.500 7 3.500H4L5 -1z" fill="#1b1b1b" />
            </svg>
          </IconRow>
          <Clock>
            <div>12:42 PM</div>
            <div>4/19/2025</div>
          </Clock>
          <CountBadge>1</CountBadge>
        </Tray>
      </Taskbar>
    </Screen>
  );
}
